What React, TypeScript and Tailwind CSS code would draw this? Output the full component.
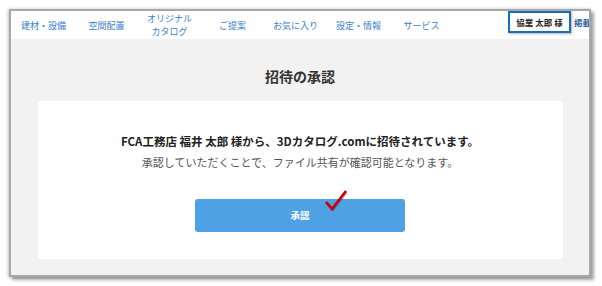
import React from 'react';

const navItems = ['建材・設備', '空間配置', 'オリジナル\nカタログ', 'ご提案', 'お気に入り', '設定・情報', 'サービス'];

const font = { fontFamily: '"Noto Sans CJK JP", "Noto Sans", sans-serif' };

const App: React.FC = () => {
  return (
    <div className="w-[602px] h-[286px] bg-white pt-[9px] pl-[9px]" style={font}>
      <div className="relative w-[582px] h-[268px] border-2 border-[#a8a8a8] shadow-[-1px_0_3px_rgba(0,0,0,0.25),3px_3px_3px_rgba(0,0,0,0.35)] bg-[#f2f2f2] flex flex-col">
        {/* Header */}
        <div className="relative h-[28px] bg-white flex items-center pl-[1px] overflow-hidden">
          {navItems.map((item) => (
            <div
              key={item}
              className="w-[63px] shrink-0 text-center text-[9px] leading-[13px] text-[#3a7fcb] whitespace-pre-line"
            >
              {item}
            </div>
          ))}
          <div className="absolute left-[497px] top-[0px] w-[63px] h-[22px] border-2 border-[#1a6fb4] flex items-center justify-center text-[8.5px] font-bold text-[#222] shadow-[1px_1px_2px_rgba(0,0,0,0.3)] bg-white">
            協業 太郎 様
          </div>
          <div className="absolute left-[563px] top-[5px] text-[8.5px] font-bold text-[#2c5f9e] whitespace-nowrap">
            掲載
          </div>
        </div>

        {/* Content */}
        <div className="flex-1 flex flex-col items-center pt-[27px]">
          <h1 className="text-[14px] leading-[20px] font-bold text-[#333]">招待の承認</h1>
          <div className="mt-[15px] w-[525px] h-[158px] bg-white rounded-[3px] flex flex-col items-center pt-[32px]">
            <p className="text-[11.5px] leading-[16px] font-bold text-[#222]">
              FCA工務店 福井 太郎 様から、3Dカタログ.comに招待されています。
            </p>
            <p className="mt-[5px] text-[11px] leading-[16px] text-[#555]">
              承認していただくことで、ファイル共有が確認可能となります。
            </p>
            <div className="relative mt-[29px]">
              <button className="w-[210px] h-[33px] rounded-[3px] bg-[#4fa1e6] text-white text-[9.5px] font-bold">
                承認
              </button>
              <svg
                className="absolute left-[130px] top-[-10px]"
                width="22"
                height="22"
                viewBox="0 0 22 22"
              >
                <path d="M1 13 L7 20 L21 2" fill="none" stroke="#5a0000" strokeOpacity="0.35" strokeWidth="3" transform="translate(0.6 0.6)" />
                <path d="M1 13 L7 20 L21 2" fill="none" stroke="#d10000" strokeWidth="2.6" strokeLinejoin="miter" />
              </svg>
            </div>
          </div>
        </div>
      </div>
    </div>
  );
};

export default App;
